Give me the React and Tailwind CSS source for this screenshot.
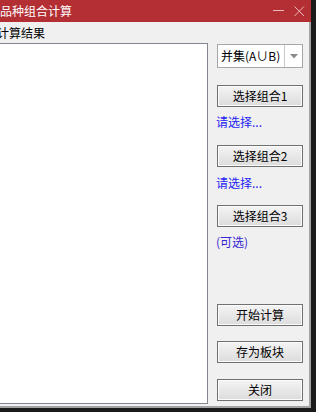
import React from "react";

const font = { fontFamily: '"Noto Sans CJK SC", "Noto Sans", sans-serif' };

function Btn({ children, className = "" }) {
  return (
    <div
      className={
        "w-[86px] h-[22px] border border-[#707070] bg-gradient-to-b from-[#f4f4f4] to-[#dcdcdc] shadow-[inset_0_0_0_1px_#fbfbfb] flex items-center justify-center text-[12px] leading-none text-black " +
        className
      }
    >
      {children}
    </div>
  );
}

export default function App() {
  return (
    <div className="w-[316px] h-[412px] bg-[#1a1a1a] overflow-hidden" style={font}>
      <div className="w-[311px] h-[408px] flex flex-col">
        <div className="h-[22px] bg-[#b32f33] flex items-center text-white text-[12px] leading-none shrink-0">
          <span className="ml-[0px]">品种组合计算</span>
          <div className="flex-1" />
          <svg width="12" height="12" viewBox="0 0 12 12" className="mr-[9px]">
            <line x1="0" y1="5.5" x2="11" y2="5.5" stroke="#e9b9bb" strokeWidth="1" />
          </svg>
          <svg width="11" height="11" viewBox="0 0 11 11" className="mr-[6px]">
            <path d="M0.5 0.5 L10 10 M10 0.5 L0.5 10" stroke="#e9b9bb" strokeWidth="1" fill="none" />
          </svg>
        </div>
        <div className="flex-1 bg-[#f0f0f0] border-r-2 border-b-2 border-[#a3a3a3] flex flex-col min-h-0">
          <div className="h-[21px] flex items-center text-[12px] leading-none text-black shrink-0">
            <span className="ml-[-3px]">计算结果</span>
          </div>
          <div className="flex">
            <div className="w-[208px] h-[361px] bg-white border-t border-r border-b border-[#828790]" />
            <div className="pl-[9px] flex flex-col">
              <div className="mt-[1px] w-[86px] h-[24px] bg-white border border-[#a6a6a6] flex items-center">
                <span className="flex-1 pl-[3px] text-[12px] leading-none text-black">并集(A∪B)</span>
                <div className="w-[18px] h-full border-l border-[#c8c8c8] flex items-center justify-center">
                  <svg width="8" height="5" viewBox="0 0 8 5">
                    <path d="M0 0 L8 0 L4 4.5 Z" fill="#8a8a8a" />
                  </svg>
                </div>
              </div>
              <Btn className="mt-[17px]">选择组合1</Btn>
              <div className="mt-[7px] h-[16px] leading-[16px] text-[12px] text-[#1c1cf5] ml-[-1px]">请选择...</div>
              <Btn className="mt-[15px]">选择组合2</Btn>
              <div className="mt-[8px] h-[16px] leading-[16px] text-[12px] text-[#1c1cf5] ml-[-1px]">请选择...</div>
              <Btn className="mt-[14px]">选择组合3</Btn>
              <div className="mt-[7px] h-[16px] leading-[16px] text-[12px] text-[#3626d4] ml-[-1px]">(可选)</div>
              <Btn className="mt-[54px]">开始计算</Btn>
              <Btn className="mt-[15px]">存为板块</Btn>
              <Btn className="mt-[16px]">关闭</Btn>
            </div>
          </div>
        </div>
      </div>
    </div>
  );
}
